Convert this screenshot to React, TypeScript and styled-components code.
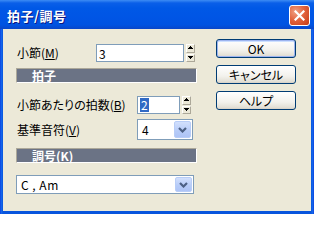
import React from 'react';
import styled, { createGlobalStyle } from 'styled-components';

const GlobalStyle = createGlobalStyle`
  html, body { margin: 0; padding: 0; background: #ffffff; }
  * { box-sizing: border-box; }
  body {
    font-family: "Noto Sans CJK JP", "Noto Sans", sans-serif;
    font-size: 12px;
    font-feature-settings: "palt";
  }
`;

const Window = styled.div`
  width: 314px;
  height: 214px;
  display: flex;
  flex-direction: column;
  background: linear-gradient(90deg, #0831d9 0, #166aee 1px, #0855dd 3px, #0855dd 311px, #166aee 313px, #0831d9 100%);
  padding: 0 3px 3px;
`;

const TitleBar = styled.div`
  height: 29px;
  margin: 0 -3px;
  flex: 0 0 29px;
  display: flex;
  align-items: center;
  justify-content: space-between;
  padding: 0 4px 0 7px;
  background: linear-gradient(#3d8cf4 0, #0a5fe8 3px, #0058e6 8px, #0055e5 18px, #0053e1 25px, #0a46c8 29px);
`;

const Title = styled.span`
  color: #ffffff;
  font-weight: bold;
  font-size: 13px;
  letter-spacing: 0.5px;
  text-shadow: 1px 1px 0 #0a1883;
  margin-top: 1px;
`;

const CloseButton = styled.div`
  width: 21px;
  height: 21px;
  margin-top: 2px;
  border: 1px solid #ffffff;
  border-radius: 3px;
  background: radial-gradient(circle at 30% 30%, #f0a184 0, #e2643f 45%, #c63a13 100%);
  display: flex;
  align-items: center;
  justify-content: center;
`;

const Client = styled.div`
  flex: 1;
  background: #ece9d8;
  display: flex;
  padding: 10px 15px 0 13px;
  gap: 19px;
`;

const Form = styled.div`
  width: 181px;
  display: flex;
  flex-direction: column;
  padding-top: 5px;
`;

const Field = styled.div<{ $h: number; $top?: number }>`
  display: flex;
  align-items: center;
  height: ${p => p.$h}px;
  margin-top: ${p => p.$top ?? 0}px;
`;

const Label = styled.span<{ $w: number }>`
  width: ${p => p.$w}px;
  flex: 0 0 ${p => p.$w}px;
  padding-left: 1px;
  color: #000000;
  white-space: nowrap;
  line-height: 12px;
`;

const TextBox = styled.div<{ $w: number }>`
  width: ${p => p.$w}px;
  height: 100%;
  border: 1px solid #7f9db9;
  background: #ffffff;
  display: flex;
  align-items: center;
  padding-left: 2px;
  color: #000000;
`;

const Selected = styled.span`
  background: #316ac5;
  color: #ffffff;
  line-height: 14px;
  padding: 0 1px;
`;

const Spinner = styled.div`
  display: flex;
  flex-direction: column;
  width: 9px;
  height: 100%;
  margin-left: 2px;
  gap: 1px;
`;

const SpinButton = styled.div`
  flex: 1;
  background: #ece9d8;
  border: 1px solid;
  border-color: #ffffff #aca899 #aca899 #ffffff;
  display: flex;
  align-items: center;
  justify-content: center;
`;

const Combo = styled.div<{ $w: number }>`
  width: ${p => p.$w}px;
  height: 100%;
  border: 1px solid #7f9db9;
  background: #ffffff;
  display: flex;
  padding: 1px;
`;

const ComboValue = styled.div`
  flex: 1;
  display: flex;
  align-items: center;
  padding-left: 3px;
  color: #000000;
  letter-spacing: 0.5px;
`;

const DropButton = styled.div`
  width: 17px;
  border: 1px solid #b8cdf7;
  border-radius: 2px;
  background: linear-gradient(#d2e0fd, #b6cbf8 60%, #aec4f6);
  display: flex;
  align-items: center;
  justify-content: center;
`;

const SectionBar = styled.div<{ $top: number }>`
  margin-top: ${p => p.$top}px;
  height: 15px;
  background: #6b7385;
  border: 1px solid;
  border-color: #aca899 #ffffff #ffffff #aca899;
  color: #ffffff;
  font-weight: bold;
  padding-left: 15px;
  line-height: 13px;
`;

const Buttons = styled.div`
  width: 80px;
  display: flex;
  flex-direction: column;
  gap: 7px;
`;

const Button = styled.div<{ $default?: boolean }>`
  height: 19px;
  border: 1px solid #003c74;
  border-radius: 3px;
  background: linear-gradient(#ffffff, #f2f1ec 60%, #e3e0d6 90%, #d6d0c5);
  box-shadow: ${p => (p.$default ? 'inset 0 0 0 1px #9db4ef, inset 0 1px 0 1px #cde0ff' : 'none')};
  display: flex;
  align-items: center;
  justify-content: center;
  color: #000000;
  line-height: 12px;
`;

const Up = () => (
  <svg width="5" height="4" viewBox="0 0 5 4">
    <path d="M2 0h1v1h1v1h1v1H0V2h1V1h1z" fill="#000" />
  </svg>
);

const Down = () => (
  <svg width="5" height="3" viewBox="0 0 5 3">
    <path d="M0 0h5v1H4v1H3v1H2V2H1V1H0z" fill="#000" />
  </svg>
);

const Chevron = () => (
  <svg width="9" height="6" viewBox="0 0 9 6">
    <path d="M1 1l3.5 3.5L8 1" stroke="#4d6185" strokeWidth="2.2" fill="none" />
  </svg>
);

const SpinBox = () => (
  <Spinner>
    <SpinButton><Up /></SpinButton>
    <SpinButton><Down /></SpinButton>
  </Spinner>
);

const App = () => {
  return (
    <Window>
      <GlobalStyle />
      <TitleBar>
        <Title>拍子/調号</Title>
        <CloseButton>
          <svg width="11" height="11" viewBox="0 0 11 11">
            <path d="M1.5 1.5l8 8M9.5 1.5l-8 8" stroke="#ffffff" strokeWidth="2.2" strokeLinecap="square" />
          </svg>
        </CloseButton>
      </TitleBar>
      <Client>
        <Form>
          <Field $h={18}>
            <Label $w={80}>小節(<u>M</u>)</Label>
            <TextBox $w={88}>3</TextBox>
            <SpinBox />
          </Field>
          <SectionBar $top={6}>拍子</SectionBar>
          <Field $h={18} $top={13}>
            <Label $w={121}>小節あたりの拍数(<u>B</u>)</Label>
            <TextBox $w={43}><Selected>2</Selected></TextBox>
            <SpinBox />
          </Field>
          <Field $h={21} $top={5}>
            <Label $w={121}>基準音符(<u>V</u>)</Label>
            <Combo $w={56}>
              <ComboValue>4</ComboValue>
              <DropButton><Chevron /></DropButton>
            </Combo>
          </Field>
          <SectionBar $top={8}>調号(<u>K</u>)</SectionBar>
          <Field $h={19} $top={12}>
            <Combo $w={178}>
              <ComboValue>C , Am</ComboValue>
              <DropButton><Chevron /></DropButton>
            </Combo>
          </Field>
        </Form>
        <Buttons>
          <Button $default>OK</Button>
          <Button>キャンセル</Button>
          <Button>ヘルプ</Button>
        </Buttons>
      </Client>
    </Window>
  );
};

export default App;
